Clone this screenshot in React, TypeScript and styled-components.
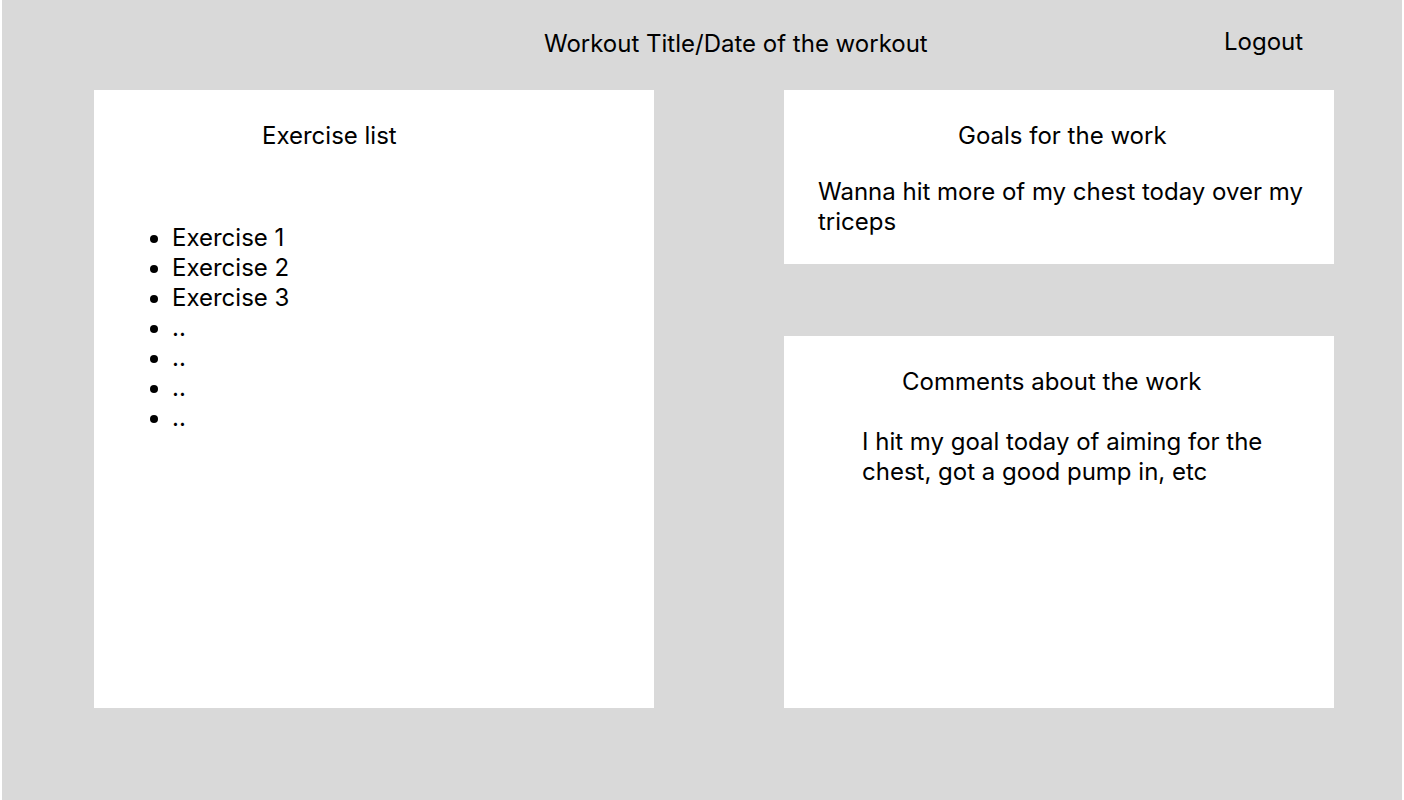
import React from "react";
import styled, { createGlobalStyle } from "styled-components";

const Global = createGlobalStyle`
  html, body { margin: 0; padding: 0; background: #ffffff; }
  body { font-family: Inter, "Noto Sans", sans-serif; color: #000; }
`;

const Frame = styled.div`
  width: 1400px;
  height: 800px;
  margin: 0 2px;
  background: #d9d9d9;
  display: flex;
  flex-direction: column;
`;

const Header = styled.header`
  height: 90px;
  display: flex;
  align-items: flex-start;
  padding-top: 29px;
  box-sizing: border-box;
`;

const PageTitle = styled.h1`
  margin: 0 0 0 542px;
  font-size: 24px;
  font-weight: 400;
  line-height: 30px;
  width: 520px;
`;

const Logout = styled.button`
  margin: -2px 0 0 160px;
  padding: 0;
  border: 0;
  background: none;
  font-family: inherit;
  font-size: 24px;
  line-height: 30px;
  color: #000;
  cursor: pointer;
`;

const Main = styled.main`
  display: flex;
  gap: 130px;
  padding-left: 92px;
`;

const Card = styled.section<{ $w: number; $h: number }>`
  width: ${(p) => p.$w}px;
  height: ${(p) => p.$h}px;
  background: #ffffff;
  padding-top: 31px;
  box-sizing: border-box;
`;

const Column = styled.div`
  display: flex;
  flex-direction: column;
  gap: 72px;
`;

const CardTitle = styled.h2<{ $x: number }>`
  margin: 0 0 0 ${(p) => p.$x}px;
  font-size: 24px;
  font-weight: 400;
  line-height: 30px;
`;

const List = styled.ul`
  margin: 72px 0 0;
  padding-left: 78px;
  font-size: 24px;
  line-height: 30px;
`;

const Body = styled.p<{ $x: number; $top: number; $w: number }>`
  margin: ${(p) => p.$top}px 0 0 ${(p) => p.$x}px;
  width: ${(p) => p.$w}px;
  font-size: 24px;
  line-height: 30px;
`;

const items = ["Exercise 1", "Exercise 2", "Exercise 3", "..", "..", "..", ".."];

export default function App() {
  return (
    <>
      <Global />
      <Frame>
        <Header>
          <PageTitle>Workout Title/Date of the workout</PageTitle>
          <Logout>Logout</Logout>
        </Header>
        <Main>
          <Card $w={560} $h={618}>
            <CardTitle $x={168}>Exercise list</CardTitle>
            <List>
              {items.map((t, i) => (
                <li key={i}>{t}</li>
              ))}
            </List>
          </Card>
          <Column>
            <Card $w={550} $h={174}>
              <CardTitle $x={174}>Goals for the work</CardTitle>
              <Body $x={34} $top={26} $w={494}>
                Wanna hit more of my chest today over my triceps
              </Body>
            </Card>
            <Card $w={550} $h={372}>
              <CardTitle $x={118}>Comments about the work</CardTitle>
              <Body $x={78} $top={30} $w={420}>
                I hit my goal today of aiming for the chest, got a good pump in, etc
              </Body>
            </Card>
          </Column>
        </Main>
      </Frame>
    </>
  );
}
